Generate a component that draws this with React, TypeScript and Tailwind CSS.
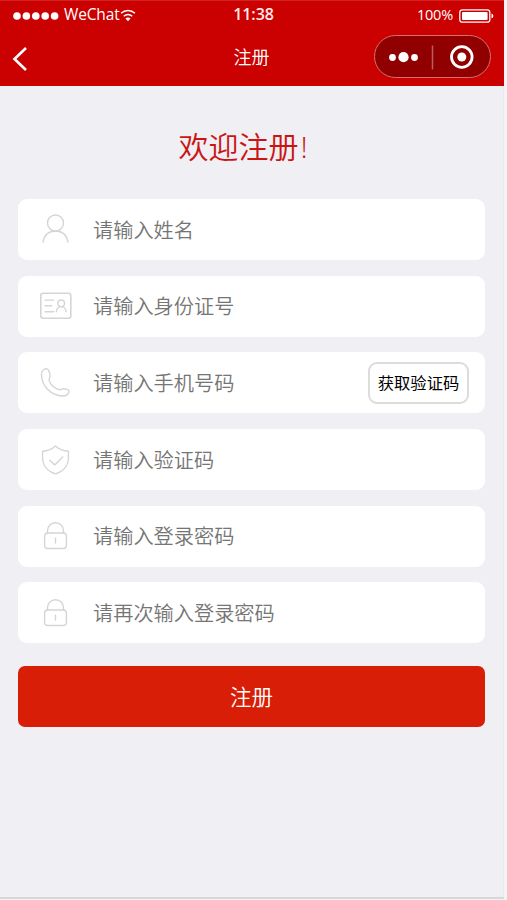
import type { ReactNode } from "react";

function UserIcon() {
  return (
    <>
      <circle cx="18.5" cy="11" r="8" />
      <path d="M6 30C7.3 23 12 19 18.5 19S29.7 23 31 30" />
    </>
  );
}

function IdCardIcon() {
  return (
    <>
      <rect x="3.8" y="5.2" width="30" height="25" rx="2.5" strokeWidth="1.6" />
      <path d="M8.2 12.1h8.5M8.2 17.8h6.5M8.2 23.7h8.5" />
      <circle cx="24.2" cy="15.3" r="3.3" />
      <path d="M19.3 23.7c.4-3.2 2.2-5.1 4.9-5.1s4.5 1.9 4.9 5.1" />
    </>
  );
}

function PhoneIcon() {
  return (
    <path d="M9 3.8C6.2 4 4.4 6.7 4.5 10C4.9 21 13.9 30.7 25.7 31C29.6 31.1 32 28.7 32 26.6C32 24.7 28.8 24 27 23.8C24.7 23.5 24 25.1 22.4 24.8C17.6 23.7 13.2 19.5 12.2 15.6C11.7 13.8 13.6 12.3 12.9 9.3C12.4 6.7 11 3.7 9 3.8Z" />
  );
}

function ShieldIcon() {
  return (
    <>
      <path d="M18.5 3.9C15 7.1 10.5 8.8 5.6 9.2V15.7C5.6 23.5 10.7 29.4 18.5 31.8C26.3 29.4 31.4 23.5 31.4 15.7V9.2C26.5 8.8 22 7.1 18.5 3.9Z" />
      <path d="M12.7 18.3l5 4.8 8-8.2" />
    </>
  );
}

function LockIcon() {
  return (
    <>
      <rect x="7.6" y="15" width="21.8" height="15.5" rx="3.2" />
      <path d="M10.5 15V12.7a8 8 0 0 1 16 0v2.3M18.5 20.2v4.8" />
    </>
  );
}

type FieldProps = { icon: ReactNode; placeholder: string; children?: ReactNode };

function Field({ icon, placeholder, children }: FieldProps) {
  return (
    <label className="flex h-[61px] items-center rounded-[9px] bg-white pr-[16px] pl-[19px]">
      <svg
        viewBox="0 0 36 36"
        className="size-9 shrink-0"
        fill="none"
        stroke="#d5d5d5"
        strokeWidth="1.4"
        strokeLinecap="round"
        strokeLinejoin="round"
      >
        {icon}
      </svg>
      <input
        className="ml-[20px] h-10 w-0 flex-1 bg-transparent text-[20.2px] font-[350] text-[#757575] outline-none placeholder:text-[#757575]"
        placeholder={placeholder}
      />
      {children}
    </label>
  );
}

function StatusBar() {
  return (
    <div className="grid h-[29px] grid-cols-3 items-center pr-[10px] pl-[13px] text-white">
      <div className="flex items-center">
        <svg width="46" height="8" viewBox="0 0 46 8" fill="white" className="shrink-0">
          <circle cx="4" cy="4" r="3.8" />
          <circle cx="13.4" cy="4" r="3.8" />
          <circle cx="22.8" cy="4" r="3.8" />
          <circle cx="32.2" cy="4" r="3.8" />
          <circle cx="41.6" cy="4" r="3.8" />
        </svg>
        <span className="mb-[2px] ml-[5px] w-[56px] text-[15.5px] leading-none tracking-[-0.15px] whitespace-nowrap">
          WeChat
        </span>
        <svg width="16" height="13" viewBox="0 0 16 13" fill="none" stroke="white" strokeWidth="1.4" className="mb-px shrink-0">
          <path d="M1 4.2c4-3.7 10-3.7 14 0M3.7 7.3c2.6-2.2 6-2.2 8.6 0" />
          <path d="M5.4 9.4c1.5-1.1 3.7-1.1 5.2 0L8 12.2Z" fill="white" stroke="none" />
        </svg>
      </div>
      <div className="mb-[3px] text-center text-[16px] leading-none font-semibold tracking-[-0.1px] text-[#ffeaea]">11:38</div>
      <div className="flex items-center justify-end">
        <span className="text-[14.5px] leading-none tracking-[-0.2px]">100%</span>
        <svg width="35" height="14" viewBox="0 0 35 14" className="ml-[6px]">
          <rect x="0.8" y="0.8" width="30" height="12.4" rx="2.5" fill="none" stroke="white" strokeWidth="1.3" />
          <rect x="3" y="3" width="25.6" height="8" rx="1" fill="white" />
          <path d="M32.5 4.5a2.6 2.6 0 0 1 0 5Z" fill="white" />
        </svg>
      </div>
    </div>
  );
}

function NavBar() {
  return (
    <div className="grid h-[55px] grid-cols-[1fr_auto_1fr] items-center pr-[13px] pl-[12px] text-white">
      <svg width="16" height="26" viewBox="0 0 16 26" fill="none" stroke="white" strokeWidth="2.6" className="mt-[2px]">
        <path d="M14 2L2.5 13L14 24" />
      </svg>
      <h1 className="mb-[2px] text-[18px] leading-none font-[350]">注册</h1>
      <div className="mb-[3px] flex h-[43px] w-[117px] items-center justify-self-end rounded-full border border-[#d57070] bg-[#900000]">
        <svg width="115" height="41" viewBox="0 0 115 41" fill="white">
          <circle cx="17.5" cy="21.5" r="3.4" />
          <circle cx="28.5" cy="21.2" r="5.1" />
          <circle cx="39.5" cy="21.5" r="3.4" />
          <path d="M57.5 9.5v24" stroke="#be5b5b" strokeWidth="1.5" />
          <circle cx="86.8" cy="21" r="10.3" fill="none" stroke="white" strokeWidth="2.8" />
          <circle cx="86.8" cy="21" r="4.5" />
        </svg>
      </div>
    </div>
  );
}

export default function App() {
  return (
    <div className="flex h-[900px] w-[507px] flex-col bg-[#f3f3f3] font-['Open_Sans','Noto_Sans_CJK_SC',sans-serif]">
      <div className="mr-[3px] flex h-[897px] flex-col border-r border-[#e9e9ec] bg-[#efeff4]">
        <header className="-mr-px h-[86px] shrink-0 border-t border-[#d32222] bg-[#cb0000]">
          <StatusBar />
          <NavBar />
        </header>
        <main className="flex flex-col pr-[18px] pl-[18px]">
          <h2 className="mt-[39px] mr-[17px] h-[44px] text-center text-[30px] leading-[44px] font-[350] text-[#cb1515]">
            欢迎注册<span className="ml-[2px] inline-block">!</span>
          </h2>
          <form className="mt-[30px] flex flex-col gap-[15.7px]">
            <Field icon={<UserIcon />} placeholder="请输入姓名" />
            <Field icon={<IdCardIcon />} placeholder="请输入身份证号" />
            <Field icon={<PhoneIcon />} placeholder="请输入手机号码">
              <button
                type="button"
                className="h-[42px] w-[101px] rounded-[9px] border-2 border-[#dcdcdc] pt-px text-[16.3px] whitespace-nowrap text-black"
              >
                获取验证码
              </button>
            </Field>
            <Field icon={<ShieldIcon />} placeholder="请输入验证码" />
            <Field icon={<LockIcon />} placeholder="请输入登录密码" />
            <Field icon={<LockIcon />} placeholder="请再次输入登录密码" />
            <button type="submit" className="mt-[6.8px] h-[61px] rounded-[7px] bg-[#d81e06] pt-[2px] text-[21.5px] font-[350] text-white">
              注册
            </button>
          </form>
        </main>
      </div>
      <div className="mr-[3px] h-[2px] bg-[#d7d7d7]" />
    </div>
  );
}
